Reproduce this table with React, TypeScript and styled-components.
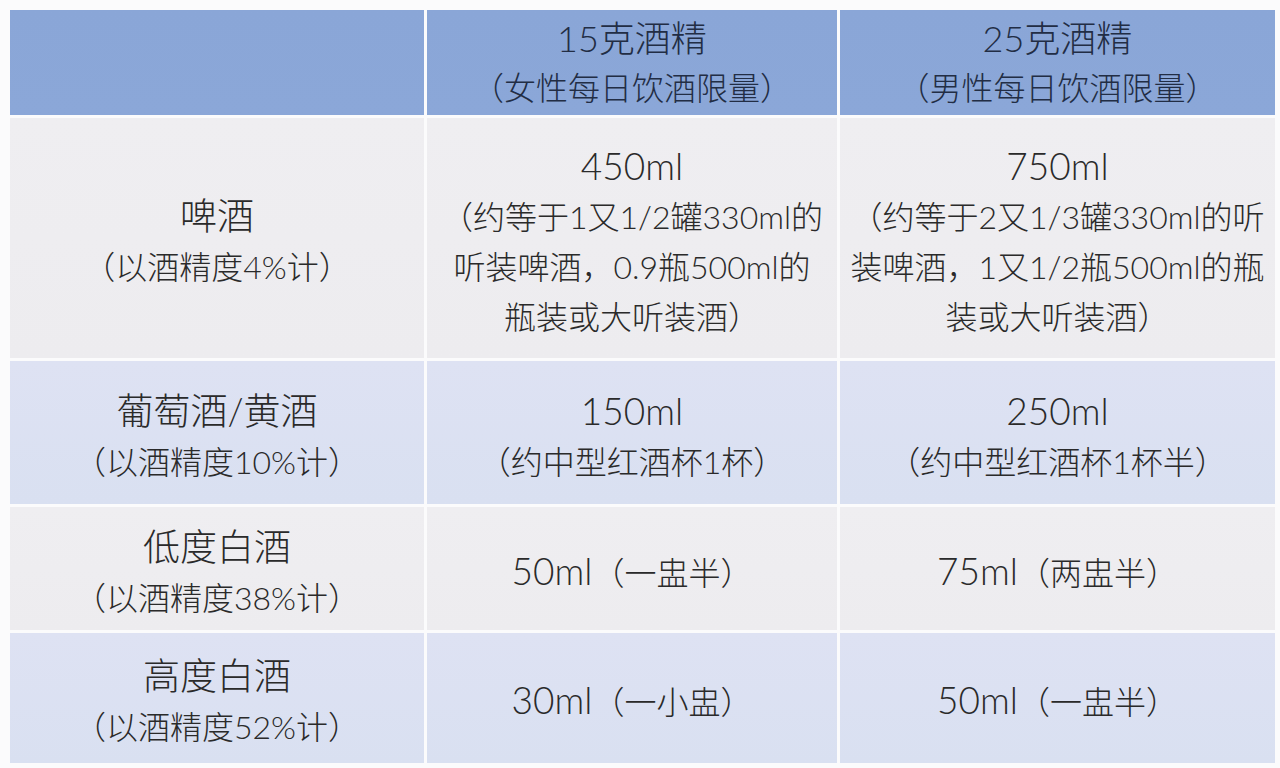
import React from 'react';
import styled, { createGlobalStyle } from 'styled-components';

const GlobalStyle = createGlobalStyle`
  html, body {
    margin: 0;
    padding: 0;
    background: #fbfbfc;
  }
  body {
    font-family: Lato, "Noto Sans CJK SC", "Noto Sans", sans-serif;
    color: #333333;
  }
`;

type Tone = 'head' | 'grey' | 'blue';

const toneBg: Record<Tone, string> = {
  head: 'linear-gradient(180deg, #8aa6d7 0%, #8ba7d8 100%)',
  grey: 'linear-gradient(180deg, #efeef1 0%, #edecef 100%)',
  blue: 'linear-gradient(180deg, #dee2f3 0%, #d9e0f1 100%)',
};

const Page = styled.div`
  padding: 10px 4px 4px 10px;
`;

const Table = styled.div`
  display: grid;
  grid-template-columns: 414px 410px 435px;
  grid-template-rows: 105px 240px 143px 123px 130px;
  gap: 3px;
`;

const Cell = styled.div<{ $tone: Tone }>`
  background: ${(p) => toneBg[p.$tone]};
  display: flex;
  flex-direction: column;
  align-items: center;
  justify-content: center;
  text-align: center;
  padding-top: ${(p) => (p.$tone === 'head' ? '0' : '6px')};
  color: ${(p) => (p.$tone === 'head' ? '#222d44' : '#2a2a2a')};
  font-weight: 300;
`;

const Main = styled.div`
  font-size: 37px;
  line-height: 52px;
  white-space: nowrap;
`;

const HeadMain = styled(Main)`
  font-size: 36px;
  line-height: 50px;
`;

const Sub = styled.div`
  font-size: 32px;
  line-height: 50px;
  white-space: nowrap;
`;

const Inline = styled.div`
  font-size: 37px;
  line-height: 52px;
  white-space: nowrap;
  display: flex;
  align-items: baseline;

  span {
    font-size: 32px;
  }
`;

interface Drink {
  name: string;
  note: string;
  tone: Tone;
  female: React.ReactNode;
  male: React.ReactNode;
}

const drinks: Drink[] = [
  {
    name: '啤酒',
    note: '（以酒精度4%计）',
    tone: 'grey',
    female: (
      <>
        <Main>450ml</Main>
        <Sub>（约等于1又1/2罐330ml的</Sub>
        <Sub>听装啤酒，0.9瓶500ml的</Sub>
        <Sub>瓶装或大听装酒）</Sub>
      </>
    ),
    male: (
      <>
        <Main>750ml</Main>
        <Sub>（约等于2又1/3罐330ml的听</Sub>
        <Sub>装啤酒，1又1/2瓶500ml的瓶</Sub>
        <Sub>装或大听装酒）</Sub>
      </>
    ),
  },
  {
    name: '葡萄酒/黄酒',
    note: '（以酒精度10%计）',
    tone: 'blue',
    female: (
      <>
        <Main>150ml</Main>
        <Sub>（约中型红酒杯1杯）</Sub>
      </>
    ),
    male: (
      <>
        <Main>250ml</Main>
        <Sub>（约中型红酒杯1杯半）</Sub>
      </>
    ),
  },
  {
    name: '低度白酒',
    note: '（以酒精度38%计）',
    tone: 'grey',
    female: (
      <Inline>
        50ml<span>（一盅半）</span>
      </Inline>
    ),
    male: (
      <Inline>
        75ml<span>（两盅半）</span>
      </Inline>
    ),
  },
  {
    name: '高度白酒',
    note: '（以酒精度52%计）',
    tone: 'blue',
    female: (
      <Inline>
        30ml<span>（一小盅）</span>
      </Inline>
    ),
    male: (
      <Inline>
        50ml<span>（一盅半）</span>
      </Inline>
    ),
  },
];

const App: React.FC = () => {
  return (
    <Page>
      <GlobalStyle />
      <Table>
        <Cell $tone="head" />
        <Cell $tone="head">
          <HeadMain>15克酒精</HeadMain>
          <Sub>（女性每日饮酒限量）</Sub>
        </Cell>
        <Cell $tone="head">
          <HeadMain>25克酒精</HeadMain>
          <Sub>（男性每日饮酒限量）</Sub>
        </Cell>
        {drinks.map((d) => (
          <React.Fragment key={d.name}>
            <Cell $tone={d.tone}>
              <Main>{d.name}</Main>
              <Sub>{d.note}</Sub>
            </Cell>
            <Cell $tone={d.tone}>{d.female}</Cell>
            <Cell $tone={d.tone}>{d.male}</Cell>
          </React.Fragment>
        ))}
      </Table>
    </Page>
  );
};

export default App;
